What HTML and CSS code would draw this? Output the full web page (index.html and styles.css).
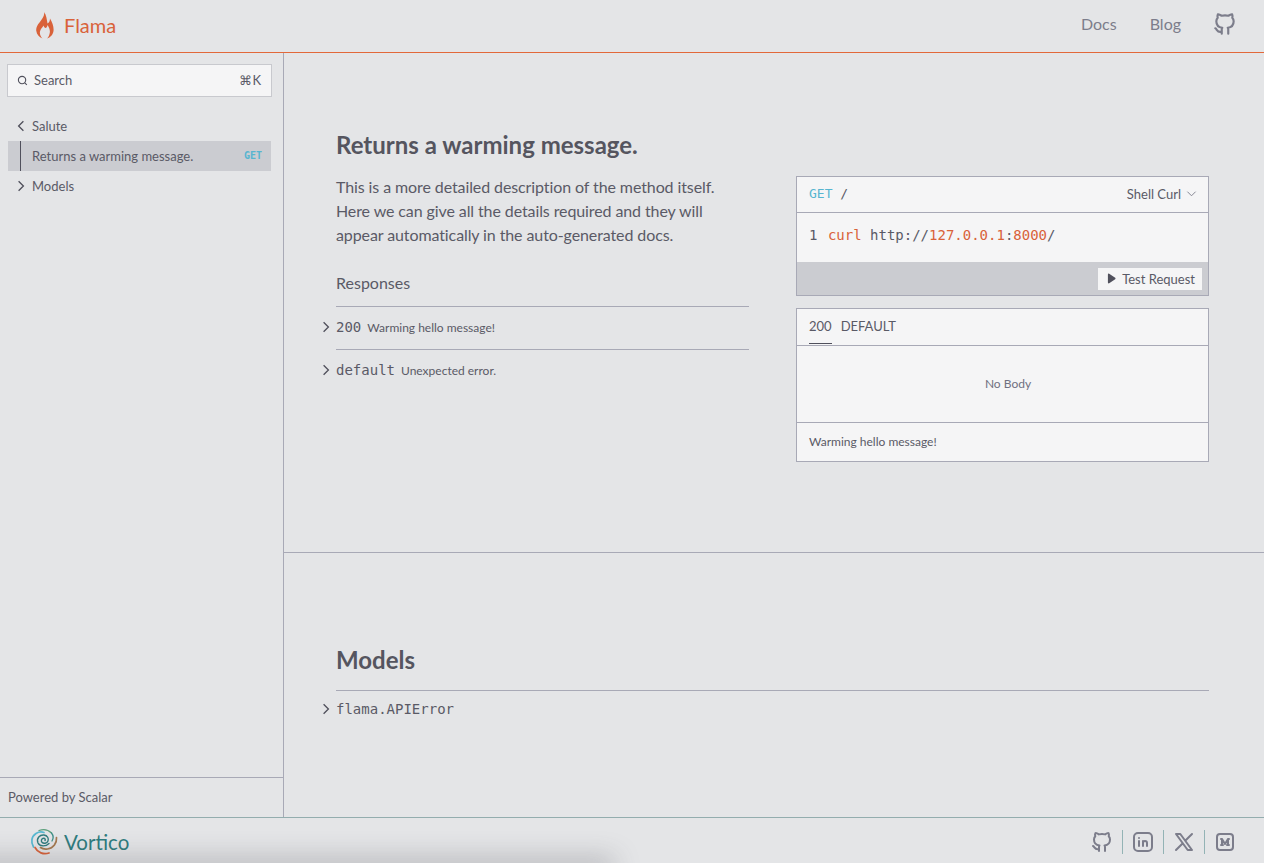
FILE: index.html
```html
<!DOCTYPE html>
<html lang="en">
<head>
    <meta charset="UTF-8">
    <meta name="viewport" content="width=device-width, initial-scale=1.0">
    <title>Flama</title>
    <link rel="stylesheet" href="styles.css">
</head>
<body>
    <header class="topbar">
        <a class="brand">
            <svg class="brand-flame" viewBox="0 0 18 27" width="18" height="27">
                <path fill="#d9623a" d="M8 0C9 4 6 7 3.500 10.500 1 13.500-.2 16 .3 19c.5 3.500 2.700 6 6.200 7.500-2-2-3-4.500-2.500-7 .5-2.500 2.500-4 3.500-6 .5 2 2 3 3 2 .5-.5.8-1.500 1-2.500 2 3 3 6 2 9-.5 2-1.500 3.500-2.500 4.500 3.500-1 6-4 6.500-7.500.5-4-1-8.500-3.500-12.500 0 2.500-1 4.500-2.500 5C10.800 7.500 10.500 3 8 0z"/>
            </svg>
            <span>Flama</span>
        </a>
        <nav class="topnav">
            <a>Docs</a>
            <a>Blog</a>
            <svg class="icon-outline topnav-git" viewBox="0 0 24 24" width="26" height="26"><path d="M9 19c-4.300 1.400-4.300-2.500-6-3m12 5v-3.500c0-1 .1-1.400-.5-2 2.800-.3 5.500-1.400 5.500-6a4.600 4.600 0 0 0-1.300-3.200 4.200 4.200 0 0 0-.1-3.200s-1.100-.3-3.500 1.300a12.300 12.300 0 0 0-6.200 0C6.500 2.800 5.400 3.100 5.400 3.100a4.200 4.200 0 0 0-.1 3.200A4.600 4.600 0 0 0 4 9.500c0 4.600 2.700 5.700 5.500 6-.6.6-.6 1.200-.5 2V21"/></svg>
        </nav>
    </header>

    <div class="layout">
        <aside class="sidebar">
            <div class="sidebar-top">
                <div class="search">
                    <svg class="search-icon" viewBox="0 0 12 12" width="11" height="11"><circle cx="5.500" cy="5.500" r="4"/><path d="M8.500 8.500l2.200 2.200"/></svg>
                    <span class="search-label">Search</span>
                    <span class="search-key">⌘K</span>
                </div>
                <ul class="menu">
                    <li class="menu-item">
                        <svg class="chevron" viewBox="0 0 10 10"><path d="M7 1L3 5l4 4"/></svg>
                        Salute
                    </li>
                    <li class="menu-item menu-item-active">
                        <span>Returns a warming message.</span>
                        <span class="menu-tag">GET</span>
                    </li>
                    <li class="menu-item">
                        <svg class="chevron" viewBox="0 0 10 10"><path d="M3 1l4 4-4 4"/></svg>
                        Models
                    </li>
                </ul>
            </div>
            <div class="powered">Powered by Scalar</div>
        </aside>

        <main class="content">
            <section class="operation">
                <h2 class="title">Returns a warming message.</h2>
                <div class="columns">
                    <div class="col-text">
                        <p class="description">This is a more detailed description of the method itself. Here we can give all the details required and they will appear automatically in the auto-generated docs.</p>
                        <h3 class="subtitle">Responses</h3>
                        <div class="response">
                            <svg class="chevron chevron-out" viewBox="0 0 10 10"><path d="M3 1l4 4-4 4"/></svg>
                            <code>200</code>
                            <span>Warming hello message!</span>
                        </div>
                        <div class="response">
                            <svg class="chevron chevron-out" viewBox="0 0 10 10"><path d="M3 1l4 4-4 4"/></svg>
                            <code>default</code>
                            <span>Unexpected error.</span>
                        </div>
                    </div>
                    <div class="col-cards">
                        <div class="card">
                            <div class="card-head">
                                <code class="method"><b>GET</b> /</code>
                                <span class="lang">Shell Curl
                                    <svg class="lang-arrow" viewBox="0 0 12 12" width="11" height="11"><path d="M1.500 4l4.500 4.500L10.500 4"/></svg>
                                </span>
                            </div>
                            <pre class="code"><span class="line-no">1</span> <span class="hl">curl</span> http://<span class="hl">127.0.0.1</span>:<span class="hl">8000</span>/</pre>
                            <div class="card-actions">
                                <button class="test-btn">
                                    <svg viewBox="0 0 10 12" width="9" height="11"><path fill="#50505c" d="M1 1.500c0-.8.7-1.200 1.400-.8l6.700 4.500c.5.400.5 1.200 0 1.600l-6.700 4.500c-.7.400-1.400 0-1.400-.8z"/></svg>
                                    Test Request
                                </button>
                            </div>
                        </div>
                        <div class="card">
                            <div class="tabs">
                                <span class="tab tab-active">200</span>
                                <span class="tab">DEFAULT</span>
                            </div>
                            <div class="no-body">No Body</div>
                            <div class="card-note">Warming hello message!</div>
                        </div>
                    </div>
                </div>
            </section>
            <section class="models">
                <h2 class="title">Models</h2>
                <div class="model">
                    <svg class="chevron chevron-out" viewBox="0 0 10 10"><path d="M3 1l4 4-4 4"/></svg>
                    <code>flama.APIError</code>
                </div>
            </section>
        </main>
    </div>

    <footer class="footer">
        <a class="vortico">
            <svg viewBox="0 0 28 28" width="28" height="28" fill="none" stroke-linecap="round">
                <path stroke="#5c9f7c" stroke-width="1.300" d="M9 2.500c4-1.500 9-1 12.500 2.500"/>
                <path stroke="#3f9088" stroke-width="1.300" d="M21.500 5c2 2.500 2 5.500.5 8"/>
                <path stroke="#57b9d2" stroke-width="1.700" d="M3.500 19C.5 14 1.500 8.500 6 5.500c2.500-1.600 5.500-2 8-1"/>
                <path stroke="#a5794f" stroke-width="1.700" d="M26.500 9.500c.5 5.500-3 10.500-9 11.500-2.500.4-5 0-7-1.500"/>
                <path stroke="#d9623a" stroke-width="1.700" d="M5 19.500c2.500 5 8.500 7.500 14 5.500"/>
                <path stroke="#2f7c7e" stroke-width="1.400" d="M19 15.500c-3 3-9 3.500-11-.5C6 10 10 6.500 14 7c3.500.5 5 3.500 4 6-1 2.500-4.500 3-6 1.300-1.300-1.600-.5-4 1.700-4 1.300 0 2 1.300 1.300 2.200"/>
            </svg>
            <span>Vortico</span>
        </a>
        <div class="social">
            <svg class="icon-outline" viewBox="0 0 24 24" width="24" height="24"><path d="M9 19c-4.300 1.400-4.300-2.500-6-3m12 5v-3.500c0-1 .1-1.400-.5-2 2.800-.3 5.500-1.400 5.500-6a4.600 4.600 0 0 0-1.300-3.200 4.200 4.200 0 0 0-.1-3.200s-1.100-.3-3.500 1.300a12.300 12.300 0 0 0-6.200 0C6.500 2.800 5.400 3.100 5.400 3.100a4.200 4.200 0 0 0-.1 3.200A4.600 4.600 0 0 0 4 9.500c0 4.600 2.700 5.700 5.500 6-.6.6-.6 1.200-.5 2V21"/></svg>
            <i class="social-sep"></i>
            <svg class="icon-outline" viewBox="0 0 24 24" width="24" height="24"><rect x="3" y="3" width="18" height="18" rx="4"/><path d="M8 11v5M8 8v.01M12 16v-5M16 16v-3a2 2 0 0 0-4 0"/></svg>
            <i class="social-sep"></i>
            <svg class="icon-outline" viewBox="0 0 24 24" width="24" height="24"><path d="M4 4l11.700 16H20L8.300 4zM4 20l6.800-6.800M13.200 10.800L20 4"/></svg>
            <i class="social-sep"></i>
            <svg class="icon-outline" viewBox="0 0 24 24" width="24" height="24"><rect x="4" y="4" width="16" height="16" rx="3"/><path d="M8 9h1l3 5 3-5h1M9 9v6M15 9v6M8 15h2M14 15h2"/></svg>
        </div>
        <div class="footer-shade"></div>
    </footer>
</body>
</html>
```

FILE: styles.css
```css
* {
    box-sizing: border-box;
}

html,
body {
    height: 100%;
}

body {
    margin: 0;
    display: flex;
    flex-direction: column;
    overflow: hidden;
    background-color: #e4e5e7;
    color: #5a5a66;
    font-family: 'Lato', sans-serif;
    font-size: 13px;
}

code,
pre {
    font-family: 'DejaVu Sans Mono', monospace;
}

.icon-outline {
    fill: none;
    stroke: #7c7d8b;
    stroke-width: 2;
    stroke-linecap: round;
    stroke-linejoin: round;
}

.chevron {
    flex: none;
    width: 12px;
    height: 12px;
    fill: none;
    stroke: #50505c;
    stroke-width: 1.1;
}

/* top bar */
.topbar {
    flex: none;
    height: 53px;
    display: flex;
    align-items: center;
    justify-content: space-between;
    padding: 0 26px 5px 36px;
    border-bottom: 1px solid #e2683a;
}

.brand {
    display: flex;
    align-items: center;
    gap: 10px;
    margin-top: 3px;
    color: #d9623a;
    font-size: 20px;
}

.topnav {
    display: flex;
    align-items: center;
    gap: 33px;
    color: #7c7d8b;
    font-size: 16px;
}

.topnav-git {
    margin-left: -2px;
}

/* sidebar + content */
.layout {
    flex: 1;
    display: flex;
    min-height: 0;
}

.sidebar {
    flex: none;
    width: 284px;
    display: flex;
    flex-direction: column;
    justify-content: space-between;
    border-right: 1px solid #a8a9b6;
}

.sidebar-top {
    padding: 11px 11px 0 7px;
}

.search {
    height: 33px;
    display: flex;
    align-items: center;
    padding: 0 10px 1px 9px;
    background-color: #f5f5f6;
    border: 1px solid #c8c9ce;
}

.search-icon {
    fill: none;
    stroke: #50505c;
    stroke-width: 1.2;
    margin-right: 6px;
}

.search-key {
    margin-left: auto;
}

.menu {
    list-style: none;
    margin: 14px 1px 0 1px;
    padding: 0;
}

.menu-item {
    height: 30px;
    display: flex;
    align-items: center;
    gap: 5px;
    padding-left: 7px;
    padding-bottom: 1px;
}

.menu-item-active {
    justify-content: space-between;
    padding: 0 9px 1px 24px;
    background-color: #cbccd1;
    background-image: linear-gradient(#50505c, #50505c);
    background-size: 1px 100%;
    background-position: 12px 0;
    background-repeat: no-repeat;
}

.menu-tag {
    color: #57b5d0;
    font-family: 'DejaVu Sans Mono', monospace;
    font-size: 10px;
    font-weight: bold;
}

.powered {
    height: 40px;
    display: flex;
    align-items: center;
    padding-left: 8px;
    padding-bottom: 1px;
    border-top: 1px solid #a8a9b6;
}

.content {
    flex: 1;
    min-width: 0;
}

.operation {
    height: 500px;
    padding: 76px 55px 0 52px;
    border-bottom: 1px solid #a8a9b6;
}

.title {
    margin: 0;
    color: #55555f;
    font-size: 24px;
    line-height: 32px;
    font-weight: 700;
}

.columns {
    display: grid;
    grid-template-columns: 413px 413px;
    gap: 47px;
    margin-top: 14px;
}

.description {
    margin: 0;
    font-size: 16px;
    line-height: 24px;
    letter-spacing: -0.1px;
}

.subtitle {
    margin: 24px 0 0;
    padding-bottom: 11px;
    font-size: 16px;
    line-height: 24px;
    font-weight: 400;
}

.response {
    position: relative;
    height: 43px;
    display: flex;
    align-items: center;
    gap: 6px;
    padding-bottom: 2px;
    border-top: 1px solid #a8a9b6;
    font-size: 12px;
}

.response code {
    font-size: 14px;
}

.chevron-out {
    position: absolute;
    left: -16px;
}

/* right hand cards */
.col-cards {
    display: flex;
    flex-direction: column;
    gap: 12px;
    padding-top: 1px;
}

.card {
    background-color: #f5f5f6;
    border: 1px solid #a8a9b6;
}

.card-head {
    height: 36px;
    display: flex;
    align-items: center;
    justify-content: space-between;
    padding: 0 11px 2px 12px;
    border-bottom: 1px solid #a8a9b6;
}

.method {
    font-size: 13px;
}

.method b {
    color: #57b5d0;
    font-weight: 400;
}

.lang {
    display: flex;
    align-items: center;
    gap: 5px;
}

.lang-arrow {
    fill: none;
    stroke: #7c7d8b;
}

.code {
    height: 49px;
    margin: 0;
    padding: 0 12px;
    font-size: 14px;
    line-height: 44px;
}

.line-no {
    margin-right: 2px;
}

.hl {
    color: #d9623a;
}

.card-actions {
    height: 33px;
    display: flex;
    align-items: center;
    justify-content: flex-end;
    padding-right: 6px;
    background-color: #cbccd1;
}

.test-btn {
    height: 22px;
    display: flex;
    align-items: center;
    gap: 6px;
    padding: 0 7px 0 9px;
    background-color: #f5f5f6;
    border: 0;
    color: #5a5a66;
    font-family: 'Lato', sans-serif;
    font-size: 13px;
}

.tabs {
    height: 37px;
    display: flex;
    gap: 9px;
    padding: 0 12px 1px;
    border-bottom: 1px solid #a8a9b6;
}

.tab {
    display: flex;
    align-items: center;
    padding-bottom: 1px;
    border-bottom: 1px solid transparent;
}

.tab-active {
    border-bottom-color: #50505c;
}

.no-body {
    height: 77px;
    display: flex;
    align-items: center;
    justify-content: center;
    padding: 0 0 2px 11px;
    color: #6f7080;
    font-size: 12px;
    border-bottom: 1px solid #a8a9b6;
}

.card-note {
    height: 38px;
    display: flex;
    align-items: center;
    padding: 0 12px 2px;
    font-size: 12px;
}

.models {
    padding: 91px 55px 0 52px;
}

.models .title {
    padding-bottom: 14px;
    border-bottom: 1px solid #a8a9b6;
}

.model {
    position: relative;
    display: flex;
    align-items: center;
    height: 36px;
}

.model code {
    font-size: 14px;
}

/* footer */
.footer {
    position: relative;
    flex: none;
    height: 46px;
    display: flex;
    align-items: center;
    justify-content: space-between;
    padding: 2px 27px 0 30px;
    border-top: 1px solid #93adae;
}

.vortico {
    display: flex;
    align-items: center;
    gap: 6px;
    color: #2f7c7e;
    font-size: 20.500px;
}

.social {
    display: flex;
    align-items: center;
    gap: 8px;
}

.social-sep {
    width: 1px;
    height: 24px;
    background-color: #93b3b5;
}

/* soft shadow coming up from under the page edge */
.footer-shade {
    position: absolute;
    left: -30px;
    bottom: -6px;
    width: 640px;
    height: 6px;
    box-shadow: 0 0 26px 4px rgba(70, 72, 80, .38);
    pointer-events: none;
}
```
